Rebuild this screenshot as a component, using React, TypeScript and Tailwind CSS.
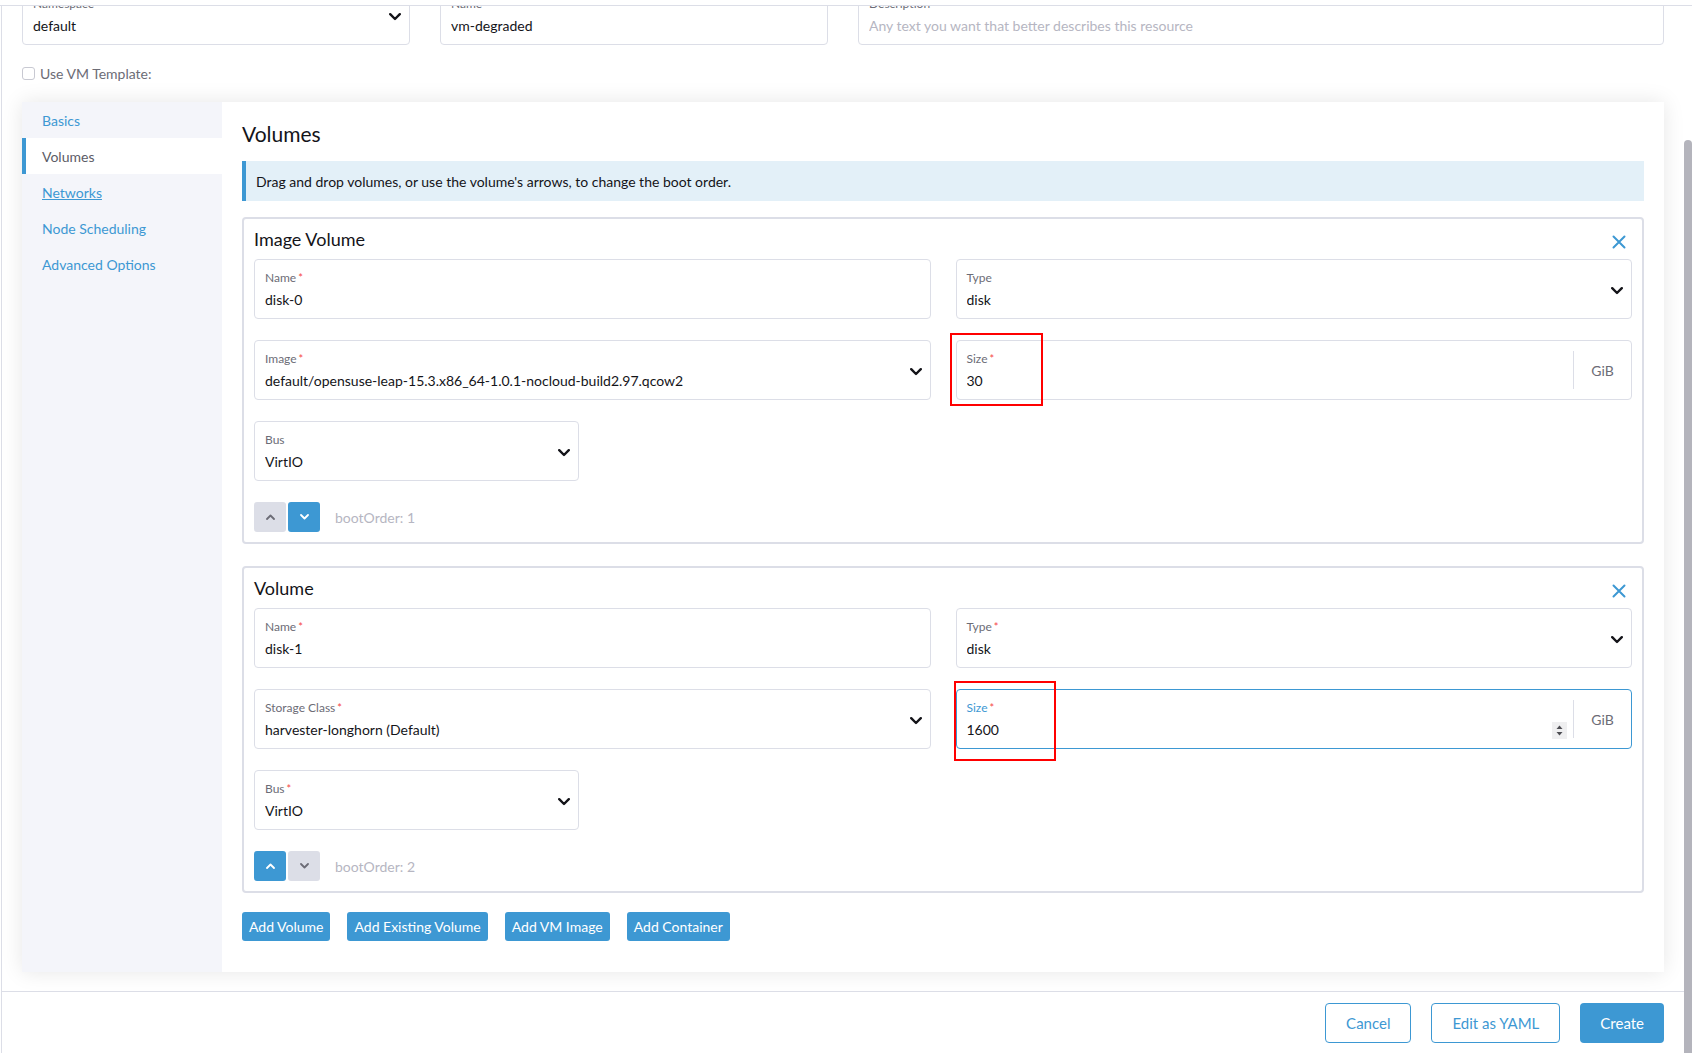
import React from 'react';

interface FieldProps {
  label: string;
  required?: boolean;
  value?: string;
  placeholder?: string;
  select?: boolean;
  focused?: boolean;
  unit?: string;
  spinner?: boolean;
  className?: string;
}

function Chevron() {
  return (
    <svg width="12" height="8" viewBox="0 0 12 8" fill="none">
      <polyline points="1.2,1.2 6,6 10.8,1.2" stroke="#141419" strokeWidth="2.4" strokeLinecap="round" strokeLinejoin="round" />
    </svg>
  );
}

function Spinner() {
  return (
    <svg width="15" height="17" viewBox="0 0 15 17" className="shrink-0">
      <rect width="15" height="17" fill="#efeff0" />
      <path d="M7.5 3.5 L10.5 7 H4.5 Z" fill="#4d4d52" />
      <path d="M7.5 13.5 L10.5 10 H4.5 Z" fill="#4d4d52" />
    </svg>
  );
}

function Field({ label, required, value, placeholder, select, focused, unit, spinner, className }: FieldProps) {
  return (
    <div
      className={`flex h-[60px] rounded-[4px] border bg-white ${
        focused ? 'border-[#3d98d3]' : 'border-[#dcdee7]'
      } ${className ?? ''}`}
    >
      <div className="min-w-0 flex-1 pl-[10px] pr-[6px] pt-[10px]">
        <div className={`text-[12px] leading-4 ${focused ? 'text-[#3d98d3]' : 'text-[#6c6c76]'}`}>
          {label}
          {required && <span className="ml-[2px] text-[11px] text-[#f64747]">*</span>}
        </div>
        <div className="mt-1 flex h-5 items-center">
          <span className={`flex-1 truncate text-[14px] leading-5 ${value ? 'text-[#141419]' : 'text-[#b6b6c2]'}`}>
            {value || placeholder}
          </span>
          {spinner && <Spinner />}
        </div>
      </div>
      {select && (
        <div className="flex items-center pr-[8px] pt-1">
          <Chevron />
        </div>
      )}
      {unit && (
        <div className="my-[10px] flex w-[58px] items-center justify-center border-l border-[#dcdee7] text-[14px] text-[#6c6c76]">
          {unit}
        </div>
      )}
    </div>
  );
}

function ArrowButton({ dir, active }: { dir: 'up' | 'down'; active: boolean }) {
  const color = active ? '#ffffff' : '#6c6c76';
  return (
    <button
      className={`flex h-[30px] w-8 items-center justify-center rounded-[3px] ${
        active ? 'bg-[#3d98d3]' : 'bg-[#dcdee7]'
      }`}
    >
      <svg width="9" height="6" viewBox="0 0 9 6" fill="none">
        {dir === 'up' ? (
          <polyline points="1,5 4.5,1.5 8,5" stroke={color} strokeWidth="1.8" strokeLinecap="round" strokeLinejoin="round" />
        ) : (
          <polyline points="1,1 4.5,4.5 8,1" stroke={color} strokeWidth="1.8" strokeLinecap="round" strokeLinejoin="round" />
        )}
      </svg>
    </button>
  );
}

function CloseIcon() {
  return (
    <svg width="14" height="14" viewBox="0 0 14 14" fill="none">
      <path d="M1.5 1.5 L12.5 12.5 M12.5 1.5 L1.5 12.5" stroke="#3d98d3" strokeWidth="2" strokeLinecap="round" />
    </svg>
  );
}

interface VolumeCardProps {
  title: string;
  bootOrder: number;
  upActive: boolean;
  downActive: boolean;
  children: React.ReactNode;
  bus: React.ReactNode;
  className?: string;
}

function VolumeCard({ title, bootOrder, upActive, downActive, children, bus, className }: VolumeCardProps) {
  return (
    <div className={`rounded-[4px] border-2 border-[#dcdee7] p-[10px] ${className ?? ''}`}>
      <div className="mb-[10px] flex h-5 items-start justify-between">
        <h3 className="text-[18px] leading-5 text-[#141419]">{title}</h3>
        <div className="mr-[6px] mt-[6px]">
          <CloseIcon />
        </div>
      </div>
      <div className="grid grid-cols-2 gap-x-[25px] gap-y-[21px]">{children}</div>
      <div className="mt-[21px] w-[325px]">{bus}</div>
      <div className="mt-[21px] flex items-center">
        <div className="flex gap-[2px]">
          <ArrowButton dir="up" active={upActive} />
          <ArrowButton dir="down" active={downActive} />
        </div>
        <span className="ml-[15px] text-[14px] text-[#b6b6c2]">bootOrder: {bootOrder}</span>
      </div>
    </div>
  );
}

const tabs = ['Basics', 'Volumes', 'Networks', 'Node Scheduling', 'Advanced Options'];

export default function App() {
  return (
    <div className="relative h-[1053px] w-[1692px] overflow-hidden bg-white font-['Lato',sans-serif] text-[#141419]">
      <div className="flex h-full">
        <main className="ml-px flex w-[1683px] flex-col border-l border-[#dcdee7]">
          <div className="px-5">
            {/* Top fields (scrolled partly under header) */}
            <div className="-mt-[15px] grid grid-cols-[388px_388px_1fr] gap-[30px]">
              <Field label="Namespace" required value="default" select />
              <Field label="Name" required value="vm-degraded" />
              <Field label="Description" placeholder="Any text you want that better describes this resource" />
            </div>

            <label className="mt-[22px] flex h-[13px] items-center gap-[5px] text-[14px] text-[#6c6c76]">
              <span className="h-[13px] w-[13px] rounded-[3px] border border-[#c8c9d2] bg-white" />
              Use VM Template:
            </label>

            {/* Tabbed panel */}
            <div className="mt-[22px] flex h-[870px] bg-white shadow-[0_0_20px_rgba(0,0,0,0.1)]">
              <nav className="flex w-[200px] flex-col bg-[#f4f5fa]">
                {tabs.map((t) =>
                  t === 'Volumes' ? (
                    <div key={t} className="flex h-9 items-center border-l-4 border-[#3d98d3] bg-white pl-4 text-[14px] text-[#5c5c66]">
                      {t}
                    </div>
                  ) : (
                    <a
                      key={t}
                      className={`flex h-9 items-center pl-5 text-[14px] text-[#3d98d3] ${t === 'Networks' ? 'underline' : ''}`}
                    >
                      {t}
                    </a>
                  )
                )}
              </nav>

              <section className="flex-1 px-5 pt-[19px]">
                <h2 className="text-[21px] leading-[26px] text-[#141419]">Volumes</h2>
                <div className="mt-[14px] flex h-10 items-center border-l-4 border-[#3d98d3] bg-[#e3f0f8] pl-[10px] text-[14px] text-[#141419]">
                  Drag and drop volumes, or use the volume's arrows, to change the boot order.
                </div>

                <VolumeCard
                  className="mt-4"
                  title="Image Volume"
                  bootOrder={1}
                  upActive={false}
                  downActive
                  bus={<Field label="Bus" value="VirtIO" select />}
                >
                  <Field label="Name" required value="disk-0" />
                  <Field label="Type" value="disk" select />
                  <Field label="Image" required value="default/opensuse-leap-15.3.x86_64-1.0.1-nocloud-build2.97.qcow2" select />
                  <Field label="Size" required value="30" unit="GiB" />
                </VolumeCard>

                <VolumeCard
                  className="mt-[22px]"
                  title="Volume"
                  bootOrder={2}
                  upActive
                  downActive={false}
                  bus={<Field label="Bus" required value="VirtIO" select />}
                >
                  <Field label="Name" required value="disk-1" />
                  <Field label="Type" required value="disk" select />
                  <Field label="Storage Class" required value="harvester-longhorn (Default)" select />
                  <Field label="Size" required value="1600" unit="GiB" focused spinner />
                </VolumeCard>

                <div className="mt-[19px] flex gap-[17px]">
                  {['Add Volume', 'Add Existing Volume', 'Add VM Image', 'Add Container'].map((b) => (
                    <button key={b} className="h-[29px] rounded-[3px] bg-[#3d98d3] px-[7px] text-[14px] text-white">
                      {b}
                    </button>
                  ))}
                </div>
              </section>
            </div>
          </div>

          <footer className="mt-[19px] flex flex-1 justify-end gap-5 border-t border-[#dcdee7] px-5 pt-[11px]">
            <button className="h-10 rounded-[4px] border border-[#3d98d3] px-5 text-[15px] text-[#3d98d3]">Cancel</button>
            <button className="h-10 rounded-[4px] border border-[#3d98d3] px-5 text-[15px] text-[#3d98d3]">Edit as YAML</button>
            <button className="h-10 rounded-[4px] bg-[#3d98d3] px-5 text-[15px] text-white">Create</button>
          </footer>
        </main>

        {/* page scrollbar */}
        <div className="w-[8px] pt-[140px]">
          <div className="h-full rounded-t-full bg-[#b4b4bc]" />
        </div>
      </div>

      {/* fixed header edge */}
      <div className="absolute inset-x-0 top-0 h-[6px] border-b border-[#dcdee7] bg-white" />

      {/* annotation boxes */}
      <div className="absolute left-[950px] top-[333px] h-[73px] w-[93px] border-2 border-[#ff0000]" />
      <div className="absolute left-[954px] top-[681px] h-[80px] w-[102px] border-2 border-[#ff0000]" />
    </div>
  );
}
